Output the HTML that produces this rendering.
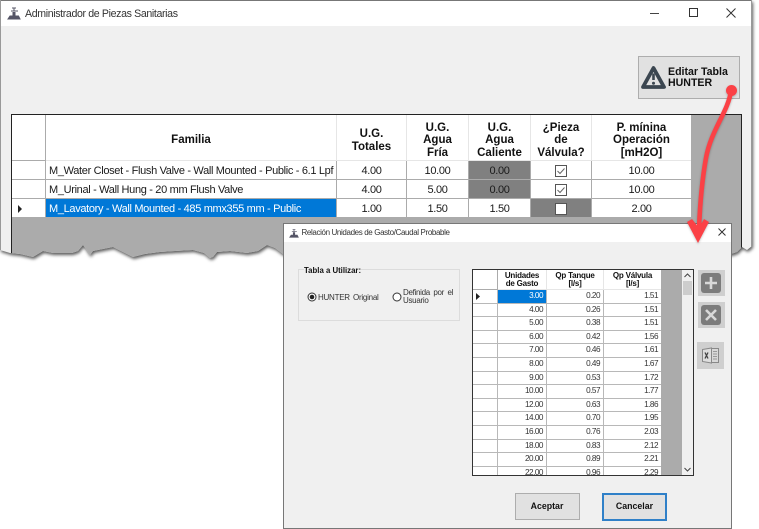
<!DOCTYPE html>
<html><head><meta charset="utf-8"><style>
html,body{margin:0;padding:0;background:#fff;width:759px;height:529px;overflow:hidden}
body{position:relative;font-family:"Liberation Sans",sans-serif;color:#1a1a1a}
.a{position:absolute;box-sizing:border-box}
.c{position:absolute;box-sizing:border-box;display:flex;align-items:center;justify-content:center;text-align:center;line-height:12.6px;font-size:11px;letter-spacing:-.33px;background:#fff;white-space:nowrap;padding-top:3px}
.h{font-weight:bold;color:#111}
.c.h{font-size:11.5px;letter-spacing:0;padding-top:6px}
.c.k{padding-top:2px}
.l{justify-content:flex-start;padding-left:3px}
.g{background:#808080}
.s{background:#0078d7;color:#fff}
.r{position:absolute;box-sizing:border-box;background:#fff;font-size:8.2px;letter-spacing:-.5px;text-align:right;padding-right:3px;line-height:12.6px;height:12.6px;color:#333;white-space:nowrap}
.t{position:absolute;box-sizing:border-box;background:#fff;font-size:8px;letter-spacing:-.22px;font-weight:bold;text-align:center;line-height:8.5px;color:#111;white-space:nowrap}
#wrap{position:absolute;left:0;top:0;width:759px;height:529px;filter:drop-shadow(1px 2px 1.5px rgba(0,0,0,.65))}
#main{position:absolute;left:0;top:0;width:752px;height:262px;background:#f0f0f0;clip-path:polygon(0 0,752px 0,752px 246px,747px 250px,742px 247px,737px 252px,731px 254px,283px 254px,275px 248px,267px 245px,258px 251px,247px 253px,230px 251px,217px 252px,213px 257px,210px 258px,204px 253px,193px 250px,175px 251px,160px 252px,145px 254px,133px 257px,125px 253px,113px 247px,103px 249px,93px 251px,90px 255px,86px 249px,83px 245px,78px 251px,72px 253px,53px 253px,43px 251px,33px 257px,20px 254px,10px 253px,0 250px)}
.blur{filter:blur(.25px)}
</style></head><body>
<div id="wrap"><div id="main">
<div class="a" style="left:0;top:0;width:752px;height:1px;background:#777"></div>
<div class="a" style="left:0;top:0;width:1px;height:262px;background:#999"></div>
<div class="a" style="left:751px;top:0;width:1px;height:262px;background:#999"></div>
<div class="a" style="left:1px;top:1px;width:750px;height:25px;background:#fff"></div>
<svg class="a" style="left:7px;top:6px" width="14" height="14" viewBox="0 0 14 14"><path d="M1 13h12l-1.5-3H8V6.5H6V10H3zM4 5h7M7 2v3M5 2h4" fill="#556" stroke="#556" stroke-width="1"/></svg>
<div class="a blur" style="left:25px;top:7px;font-size:10.6px;letter-spacing:-.36px;line-height:14px;color:#333;white-space:nowrap">Administrador de Piezas Sanitarias</div>
<div class="a" style="left:650px;top:13px;width:9px;height:1px;background:#444"></div>
<div class="a" style="left:689px;top:8px;width:9px;height:9px;border:1px solid #333"></div>
<svg class="a" style="left:726px;top:8px" width="10" height="10"><path d="M.5.5l9 9M9.5.5l-9 9" stroke="#333" stroke-width="1" fill="none"/></svg>
<div class="a" style="left:638px;top:56px;width:102px;height:43px;background:#e1e1e1;border:1px solid #adadad"></div>
<svg class="a" style="left:640px;top:64px" width="27" height="26" viewBox="0 0 27 26"><path d="M13.500 4L24 23H3z" fill="none" stroke="#3b4650" stroke-width="3.800" stroke-linejoin="round"/><path d="M13.500 9.500v6.500" stroke="#3b4650" stroke-width="2.600"/><circle cx="13.500" cy="19.300" r="1.500" fill="#3b4650"/></svg>
<div class="a h blur" style="left:668px;top:66.500px;font-size:10.6px;line-height:11px;white-space:nowrap">Editar Tabla<br>HUNTER</div>

<div class="a" style="left:11px;top:114px;width:731px;height:148px;background:#ababab;border:1px solid #222"></div>
<div class="a" style="left:46px;top:115px;width:645px;height:46px;background:#e6e6e6"></div>
<div class="c" style="left:12px;top:115px;width:33px;height:45px"></div>
<div class="c h blur" style="left:46px;top:115px;width:290px;height:45px">Familia</div>
<div class="c h blur" style="left:337px;top:115px;width:69px;height:45px">U.G.<br>Totales</div>
<div class="c h blur" style="left:407px;top:115px;width:61px;height:45px">U.G.<br>Agua<br>Fría</div>
<div class="c h blur" style="left:469px;top:115px;width:61px;height:45px">U.G.<br>Agua<br>Caliente</div>
<div class="c h blur" style="left:531px;top:115px;width:60px;height:45px">¿Pieza<br>de<br>Válvula?</div>
<div class="c h blur" style="left:592px;top:115px;width:99px;height:45px">P. mínina<br>Operación<br>[mH2O]</div>

<div class="c" style="left:12px;top:161px;width:33px;height:18px"></div>
<div class="c l blur" style="left:46px;top:161px;width:290px;height:18px">M_Water Closet - Flush Valve - Wall Mounted - Public - 6.1 Lpf</div>
<div class="c blur" style="left:337px;top:161px;width:69px;height:18px">4.00</div>
<div class="c blur" style="left:407px;top:161px;width:61px;height:18px">10.00</div>
<div class="c g blur" style="left:469px;top:161px;width:61px;height:18px">0.00</div>
<div class="c k" style="left:531px;top:161px;width:60px;height:18px"><svg width="12" height="12"><rect x=".5" y=".5" width="11" height="11" fill="#fff" stroke="#555"/><path d="M2.500 6l2.500 2.500 4.500-5" fill="none" stroke="#666"/></svg></div>
<div class="c blur" style="left:592px;top:161px;width:99px;height:18px">10.00</div>

<div class="c" style="left:12px;top:180px;width:33px;height:18px"></div>
<div class="c l blur" style="left:46px;top:180px;width:290px;height:18px">M_Urinal - Wall Hung - 20 mm Flush Valve</div>
<div class="c blur" style="left:337px;top:180px;width:69px;height:18px">4.00</div>
<div class="c blur" style="left:407px;top:180px;width:61px;height:18px">5.00</div>
<div class="c g blur" style="left:469px;top:180px;width:61px;height:18px">0.00</div>
<div class="c k" style="left:531px;top:180px;width:60px;height:18px"><svg width="12" height="12"><rect x=".5" y=".5" width="11" height="11" fill="#fff" stroke="#555"/><path d="M2.500 6l2.500 2.500 4.500-5" fill="none" stroke="#666"/></svg></div>
<div class="c blur" style="left:592px;top:180px;width:99px;height:18px">10.00</div>

<div class="c" style="left:12px;top:199px;width:33px;height:18px;justify-content:flex-start;padding:1px 0 0 5px"><svg width="6" height="8"><path d="M1 0l4 4-4 4z" fill="#222"/></svg></div>
<div class="c l s blur" style="left:46px;top:199px;width:290px;height:18px">M_Lavatory - Wall Mounted - 485 mmx355 mm - Public</div>
<div class="c blur" style="left:337px;top:199px;width:69px;height:18px">1.00</div>
<div class="c blur" style="left:407px;top:199px;width:61px;height:18px">1.50</div>
<div class="c blur" style="left:469px;top:199px;width:61px;height:18px">1.50</div>
<div class="c g k" style="left:531px;top:199px;width:60px;height:18px"><svg width="12" height="12"><rect x=".5" y=".5" width="11" height="11" fill="#fff" stroke="#555"/></svg></div>
<div class="c blur" style="left:592px;top:199px;width:99px;height:18px">2.00</div>
</div></div>

<div class="a" style="left:283px;top:223px;width:449px;height:305.500px;background:#f0f0f0;border:1px solid #777;overflow:hidden">
<div class="a" style="left:0;top:0;width:447px;height:18px;background:#fff"></div>
</div>
<svg class="a" style="left:289px;top:228px" width="10" height="10" viewBox="0 0 14 14"><path d="M1 13h12l-1.500-3H8V6.500H6V10H3zM4 5h7M7 2v3M5 2h4" fill="#556" stroke="#556"/></svg>
<div class="a blur" style="left:301.500px;top:226.500px;font-size:8px;letter-spacing:-.37px;line-height:12px;color:#333;white-space:nowrap">Relación Unidades de Gasto/Caudal Probable</div>
<svg class="a" style="left:718px;top:228px" width="8" height="8"><path d="M.5.5l7 7M7.500.5l-7 7" stroke="#333" fill="none"/></svg>

<div class="a" style="left:298px;top:269px;width:162px;height:52px;border:1px solid #dcdcdc"></div>
<div class="a h blur" style="left:304px;top:265.500px;background:#f0f0f0;font-size:7.800px;line-height:10px;white-space:nowrap">Tabla a Utilizar:</div>
<svg class="a" style="left:307px;top:292px" width="10" height="10"><circle cx="5" cy="5" r="4" fill="#fff" stroke="#333"/><circle cx="5" cy="5" r="2.300" fill="#222"/></svg>
<div class="a blur" style="left:318px;top:292.500px;font-size:8px;letter-spacing:-.25px;line-height:10px;word-spacing:1.200px;color:#333;white-space:nowrap">HUNTER Original</div>
<svg class="a" style="left:391.500px;top:292px" width="10" height="10"><circle cx="5" cy="5" r="4" fill="#fff" stroke="#333"/></svg>
<div class="a blur" style="left:403px;top:288.500px;font-size:8px;letter-spacing:-.3px;line-height:8.500px;word-spacing:1.500px;color:#333;white-space:nowrap">Definida por el<br>Usuario</div>

<div class="a" style="left:471.500px;top:269px;width:222px;height:207px;background:#ababab;border:1px solid #333;overflow:hidden"></div>
<div class="a" style="left:682px;top:270px;width:10.500px;height:205px;background:#f0f0f0"></div>
<div class="a" style="left:683px;top:281px;width:8.500px;height:14px;background:#cdcdcd"></div>
<svg class="a" style="left:684px;top:273px" width="7" height="5"><path d="M.5 4l3-3 3 3" fill="none" stroke="#444"/></svg>
<svg class="a" style="left:684px;top:467px" width="7" height="5"><path d="M.5 1l3 3 3-3" fill="none" stroke="#444"/></svg>
<div class="a" style="left:498px;top:270px;width:163px;height:20px;background:#e6e6e6"></div>
<div class="t" style="left:473px;top:270px;width:24px;height:19px"></div>
<div class="t blur" style="left:498px;top:270px;width:48px;height:19px;padding-top:1.500px">Unidades<br>de Gasto</div>
<div class="t blur" style="left:547px;top:270px;width:56px;height:19px;padding-top:1.500px">Qp Tanque<br>[l/s]</div>
<div class="t blur" style="left:604px;top:270px;width:57px;height:19px;padding-top:1.500px">Qp Válvula<br>[l/s]</div>
<div class="a" id="rows" style="left:473px;top:290px;width:188px;height:185px;overflow:hidden;background:#b8b8b8">
<div class="r" style="left:0;top:0;width:24px"><svg width="5" height="7" style="position:absolute;left:3px;top:3px"><path d="M0 0l4 3.500-4 3.500z" fill="#222"/></svg></div><div class="r blur" style="left:25px;top:0;width:48px;background:#0078d7;color:#fff">3.00</div><div class="r blur" style="left:74px;top:0;width:56px">0.20</div><div class="r blur" style="left:131px;top:0;width:57px">1.51</div>
<div class="r" style="left:0;top:13.600px;width:24px"></div><div class="r blur" style="left:25px;top:13.600px;width:48px">4.00</div><div class="r blur" style="left:74px;top:13.600px;width:56px">0.26</div><div class="r blur" style="left:131px;top:13.600px;width:57px">1.51</div>
<div class="r" style="left:0;top:27.200px;width:24px"></div><div class="r blur" style="left:25px;top:27.200px;width:48px">5.00</div><div class="r blur" style="left:74px;top:27.200px;width:56px">0.38</div><div class="r blur" style="left:131px;top:27.200px;width:57px">1.51</div>
<div class="r" style="left:0;top:40.800px;width:24px"></div><div class="r blur" style="left:25px;top:40.800px;width:48px">6.00</div><div class="r blur" style="left:74px;top:40.800px;width:56px">0.42</div><div class="r blur" style="left:131px;top:40.800px;width:57px">1.56</div>
<div class="r" style="left:0;top:54.400px;width:24px"></div><div class="r blur" style="left:25px;top:54.400px;width:48px">7.00</div><div class="r blur" style="left:74px;top:54.400px;width:56px">0.46</div><div class="r blur" style="left:131px;top:54.400px;width:57px">1.61</div>
<div class="r" style="left:0;top:68px;width:24px"></div><div class="r blur" style="left:25px;top:68px;width:48px">8.00</div><div class="r blur" style="left:74px;top:68px;width:56px">0.49</div><div class="r blur" style="left:131px;top:68px;width:57px">1.67</div>
<div class="r" style="left:0;top:81.600px;width:24px"></div><div class="r blur" style="left:25px;top:81.600px;width:48px">9.00</div><div class="r blur" style="left:74px;top:81.600px;width:56px">0.53</div><div class="r blur" style="left:131px;top:81.600px;width:57px">1.72</div>
<div class="r" style="left:0;top:95.200px;width:24px"></div><div class="r blur" style="left:25px;top:95.200px;width:48px">10.00</div><div class="r blur" style="left:74px;top:95.200px;width:56px">0.57</div><div class="r blur" style="left:131px;top:95.200px;width:57px">1.77</div>
<div class="r" style="left:0;top:108.800px;width:24px"></div><div class="r blur" style="left:25px;top:108.800px;width:48px">12.00</div><div class="r blur" style="left:74px;top:108.800px;width:56px">0.63</div><div class="r blur" style="left:131px;top:108.800px;width:57px">1.86</div>
<div class="r" style="left:0;top:122.400px;width:24px"></div><div class="r blur" style="left:25px;top:122.400px;width:48px">14.00</div><div class="r blur" style="left:74px;top:122.400px;width:56px">0.70</div><div class="r blur" style="left:131px;top:122.400px;width:57px">1.95</div>
<div class="r" style="left:0;top:136px;width:24px"></div><div class="r blur" style="left:25px;top:136px;width:48px">16.00</div><div class="r blur" style="left:74px;top:136px;width:56px">0.76</div><div class="r blur" style="left:131px;top:136px;width:57px">2.03</div>
<div class="r" style="left:0;top:149.600px;width:24px"></div><div class="r blur" style="left:25px;top:149.600px;width:48px">18.00</div><div class="r blur" style="left:74px;top:149.600px;width:56px">0.83</div><div class="r blur" style="left:131px;top:149.600px;width:57px">2.12</div>
<div class="r" style="left:0;top:163.200px;width:24px"></div><div class="r blur" style="left:25px;top:163.200px;width:48px">20.00</div><div class="r blur" style="left:74px;top:163.200px;width:56px">0.89</div><div class="r blur" style="left:131px;top:163.200px;width:57px">2.21</div>
<div class="r" style="left:0;top:176.800px;width:24px"></div><div class="r blur" style="left:25px;top:176.800px;width:48px">22.00</div><div class="r blur" style="left:74px;top:176.800px;width:56px">0.96</div><div class="r blur" style="left:131px;top:176.800px;width:57px">2.29</div>
</div>

<div class="a" style="left:698px;top:270px;width:27px;height:26px;background:#cfcfcf"></div>
<div class="a" style="left:701px;top:272.500px;width:20px;height:20px;background:#7c7c7c;border-radius:3px"></div>
<svg class="a" style="left:701px;top:272.500px" width="20" height="20"><path d="M10 4v12M4 10h12" stroke="#d8d8d8" stroke-width="2.600"/></svg>
<div class="a" style="left:698px;top:302px;width:27px;height:26px;background:#cfcfcf"></div>
<div class="a" style="left:701px;top:305px;width:20px;height:20px;background:#7c7c7c;border-radius:3px"></div>
<svg class="a" style="left:701px;top:305px" width="20" height="20"><path d="M5 5l10 10M15 5L5 15" stroke="#d8d8d8" stroke-width="2.600"/></svg>
<div class="a" style="left:697px;top:342px;width:27px;height:27px;background:#cfcfcf"></div>
<svg class="a" style="left:702px;top:347px" width="18" height="17" viewBox="0 0 18 17"><path d="M6.500 1.500h10v14h-10" fill="#d8d8d8" stroke="#888"/><path d="M11 4.500h4M11 7h4M11 9.500h4M11 12h4" stroke="#999"/><path d="M.5 2.500l9-1.500v15l-9-1.500z" fill="#dedede" stroke="#888"/><path d="M3 5.500l3 6M6 5.500l-3 6" stroke="#444" stroke-width="1.300"/></svg>

<div class="a" style="left:514.500px;top:493px;width:65px;height:27px;background:#e1e1e1;border:1px solid #adadad"></div>
<div class="a h blur" style="left:514.500px;top:493px;width:65px;height:27px;text-align:center;font-size:8.800px;line-height:27px">Aceptar</div>
<div class="a" style="left:602px;top:493px;width:65px;height:27.500px;background:#e1e1e1;border:2px solid #2f80c8"></div>
<div class="a h blur" style="left:602px;top:493px;width:65px;height:27px;text-align:center;font-size:8.800px;line-height:27px">Cancelar</div>

<svg class="a" style="left:0;top:0;pointer-events:none;filter:drop-shadow(0 1px 1px rgba(0,0,0,.25))" width="759" height="529"><path d="M731 91C728 112 711 130 706 158C702 180 700 205 699 228" fill="none" stroke="#fb4146" stroke-width="4.600" stroke-linecap="round"/><circle cx="731.500" cy="90.500" r="5.500" fill="#fb4146"/><path d="M687 222l5-3 7 9 5-9 5 3-11 21z" fill="#fb4146"/></svg>
</body></html>
